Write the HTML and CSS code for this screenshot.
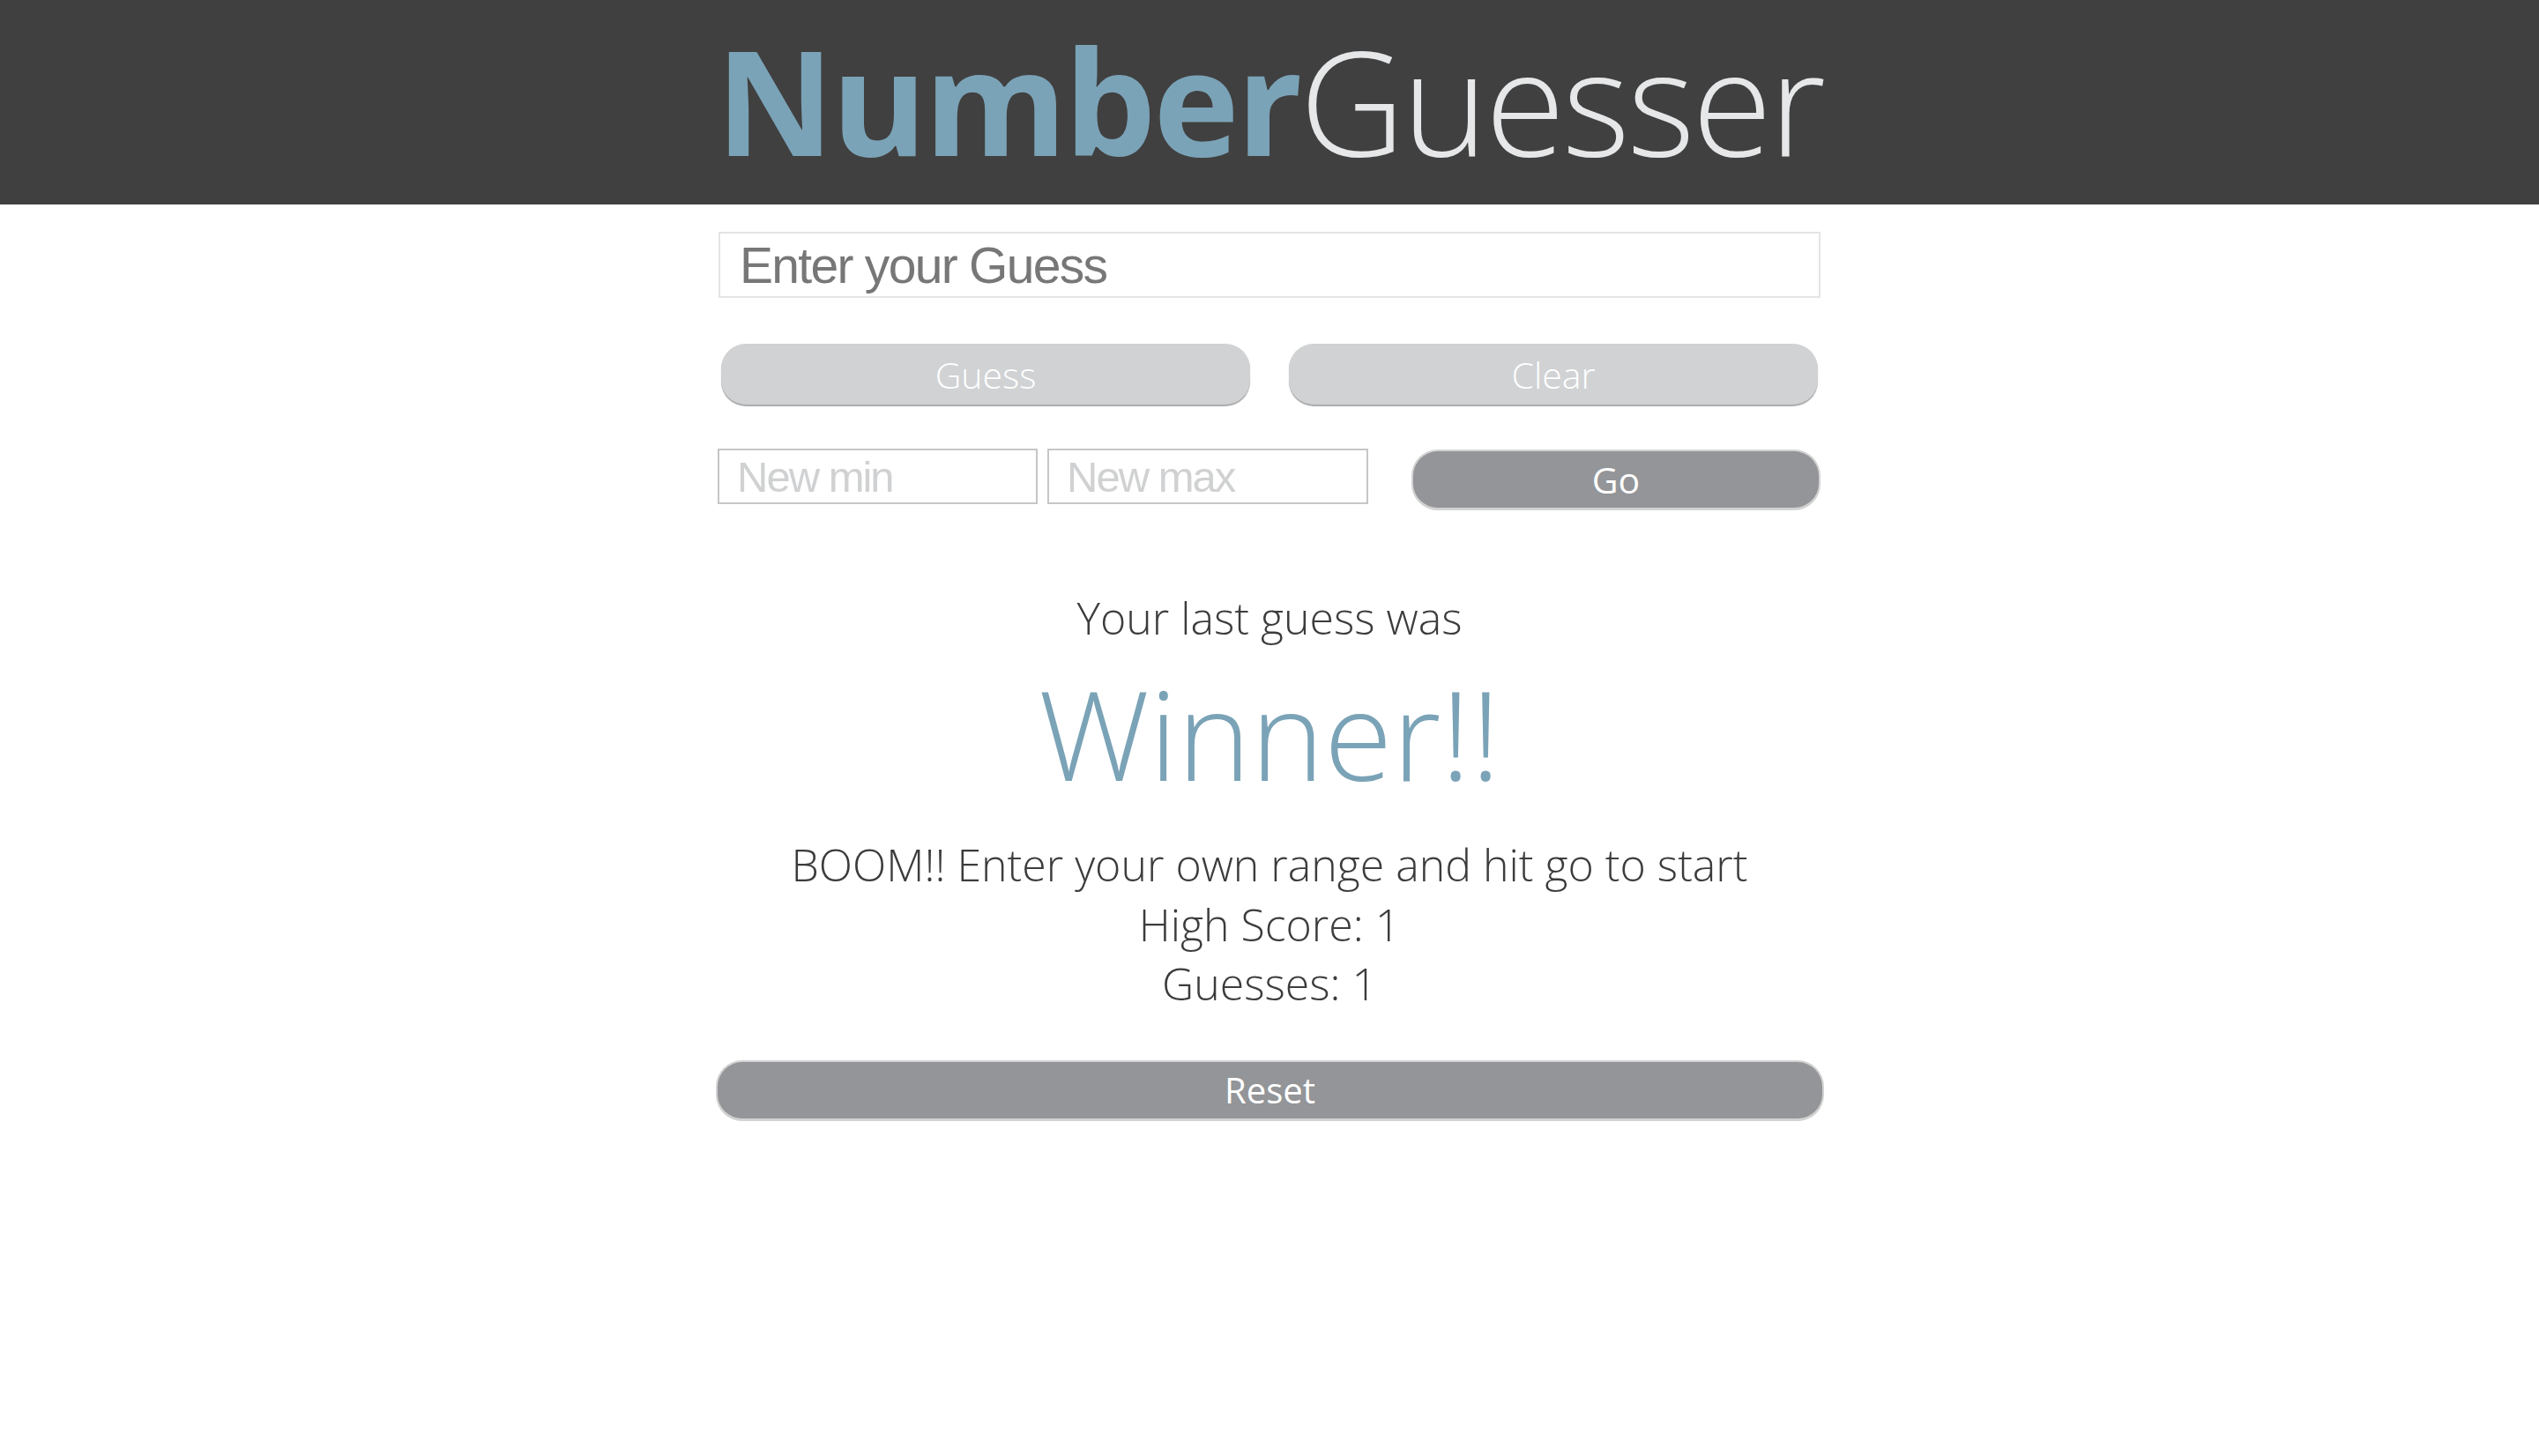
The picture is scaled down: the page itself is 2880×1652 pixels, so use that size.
FILE: index.html
```html
<!DOCTYPE html>
<html lang="en">
<head>
<meta charset="utf-8">
<title>Number Guesser</title>
<link rel="stylesheet" href="styles.css">
</head>
<body>
<header class="site-header">
  <h1 class="title"><span class="title-bold">Number</span><span class="title-light">Guesser</span></h1>
</header>
<main class="game">
  <input class="guess-input" type="text" placeholder="Enter your Guess">
  <div class="button-row">
    <button class="btn btn-light">Guess</button>
    <button class="btn btn-light">Clear</button>
  </div>
  <div class="range-row">
    <input class="range-input" type="text" placeholder="New min">
    <input class="range-input range-max" type="text" placeholder="New max">
    <button class="btn btn-dark btn-go">Go</button>
  </div>
  <p class="last-label">Your last guess was</p>
  <p class="last-value">Winner!!</p>
  <div class="messages">
    <p class="msg">BOOM!! Enter your own range and hit go to start</p>
    <p class="msg">High Score: 1</p>
    <p class="msg">Guesses: 1</p>
  </div>
  <button class="btn btn-dark btn-reset">Reset</button>
</main>
</body>
</html>
```

FILE: styles.css
```css
* {
  box-sizing: border-box;
}

body {
  margin: 0;
  background: #ffffff;
  font-family: "Open Sans", "Liberation Sans", sans-serif;
  color: #404040;
}

.site-header {
  height: 232px;
  background: #404040;
  display: flex;
  justify-content: center;
}

.title {
  margin: 0;
  font-size: 165px;
  line-height: 226px;
  letter-spacing: -3.2px;
}

.title-bold {
  font-weight: 700;
  color: #7ba3b7;
}

.title-light {
  font-weight: 300;
  color: #e6e7e8;
}

.game {
  width: 1250px;
  margin: 0 auto;
  padding-top: 31px;
  display: flex;
  flex-direction: column;
}

.guess-input {
  width: 100%;
  height: 75px;
  border: 2px solid #e4e4e4;
  padding: 0 22px;
  font-family: "Liberation Sans", Arial, sans-serif;
  font-size: 57px;
  letter-spacing: -1.7px;
  color: #777;
  outline: none;
}

.guess-input::placeholder {
  color: #777777;
}

.button-row {
  margin-top: 52px;
  padding: 0 3px;
  display: flex;
  justify-content: space-between;
}

.btn {
  border: none;
  font-family: "Open Sans", sans-serif;
  font-weight: 400;
  color: #ffffff;
  cursor: pointer;
  padding: 0;
}

.btn-light {
  width: 600px;
  height: 69px;
  border-radius: 28px;
  background: #d1d2d4;
  box-shadow: 0 2px 1px #a9aaac;
  font-size: 41px;
  font-weight: 300;
}

.btn-dark {
  background: #939598;
  border: 2px solid #d2d2d2;
  border-bottom-width: 3px;
  font-size: 41px;
}

.range-row {
  margin-top: 50px;
  margin-left: -1px;
  display: flex;
  align-items: flex-start;
}

.range-input {
  width: 363px;
  height: 63px;
  border: 2px solid #c6c6c6;
  padding: 0 20px;
  font-family: "Liberation Sans", Arial, sans-serif;
  font-size: 49px;
  letter-spacing: -2px;
  color: #999;
  outline: none;
}

.range-input::placeholder {
  color: #d0d1d2;
}

.range-max {
  margin-left: 11px;
  width: 364px;
}

.btn-go {
  margin-left: 49px;
  margin-top: 1px;
  width: 466px;
  height: 69px;
  border-radius: 30px;
}

.last-label {
  margin: 87px 0 0;
  text-align: center;
  font-size: 50px;
  line-height: 71px;
  font-weight: 300;
  color: #3c3c3c;
}

.last-value {
  margin: 10px 0 0;
  text-align: center;
  font-size: 141px;
  line-height: 169px;
  font-weight: 300;
  color: #7ba3b7;
}

.messages {
  margin-top: 32px;
}

.msg {
  margin: 0;
  text-align: center;
  font-size: 50px;
  line-height: 67.5px;
  font-weight: 300;
  color: #3c3c3c;
}

.btn-reset {
  margin-top: 52px;
  margin-left: -3px;
  width: 1257px;
  height: 69px;
  border-radius: 30px;
  font-size: 40px;
}
```
